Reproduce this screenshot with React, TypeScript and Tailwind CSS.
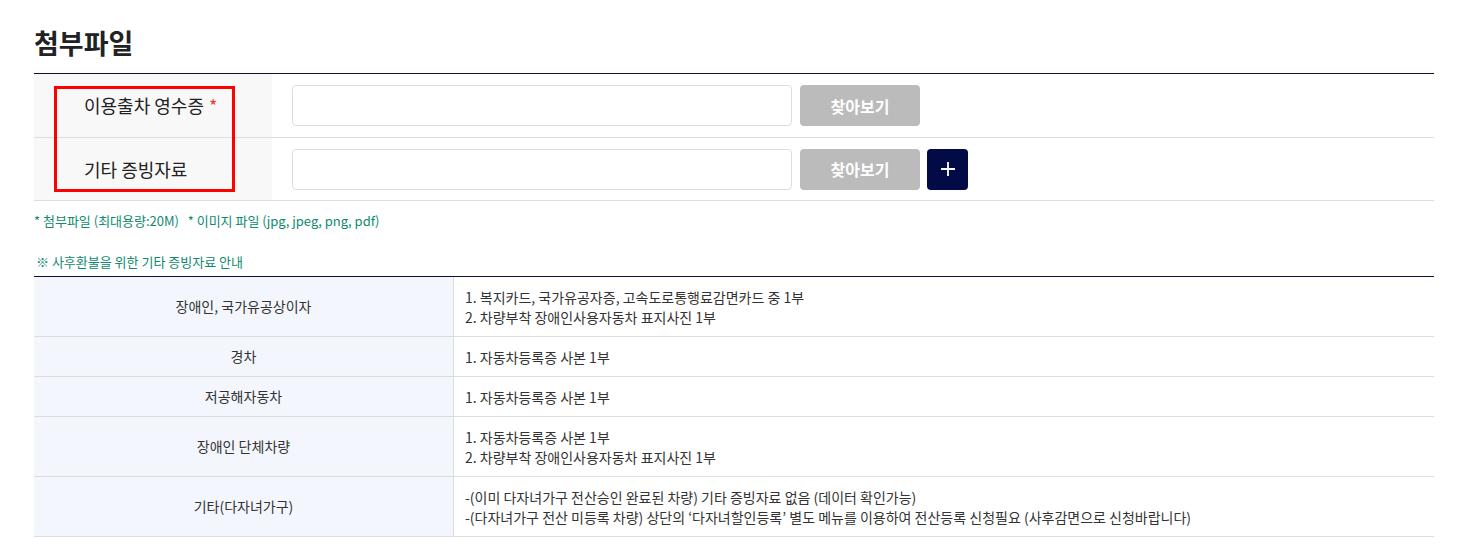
import React from 'react'

const font = { fontFamily: '"Noto Sans CJK KR", "Noto Sans", sans-serif' }

const guide = [
  { title: '장애인, 국가유공상이자', lines: ['1. 복지카드, 국가유공자증, 고속도로통행료감면카드 중 1부', '2. 차량부착 장애인사용자동차 표지사진 1부'] },
  { title: '경차', lines: ['1. 자동차등록증 사본 1부'] },
  { title: '저공해자동차', lines: ['1. 자동차등록증 사본 1부'] },
  { title: '장애인 단체차량', lines: ['1. 자동차등록증 사본 1부', '2. 차량부착 장애인사용자동차 표지사진 1부'] },
  {
    title: '기타(다자녀가구)',
    lines: [
      '-(이미 다자녀가구 전산승인 완료된 차량) 기타 증빙자료 없음 (데이터 확인가능)',
      '-(다자녀가구 전산 미등록 차량) 상단의 ‘다자녀할인등록’ 별도 메뉴를 이용하여 전산등록 신청필요 (사후감면으로 신청바랍니다)',
    ],
  },
]

function FileRow({ label, required, plus, tall }: { label: string; required?: boolean; plus?: boolean; tall?: boolean }) {
  return (
    <div className={`flex border-b border-[#dddddd] ${tall ? 'h-[64px]' : 'h-[63px]'}`}>
      <div className="flex w-[238px] items-center bg-[#f8f8f8] pl-[50px] text-[18px] text-[#222]">
        {label}
        {required && <span className="ml-[5px] text-[#e83a36]">*</span>}
      </div>
      <div className="flex items-center pl-[20px]">
        <input
          type="text"
          className="h-[41px] w-[500px] rounded-[4px] border border-[#dddddd] bg-white outline-none"
        />
        <button className="ml-[8px] h-[41px] w-[120px] rounded-[4px] bg-[#bbbbbb] text-[16px] font-bold text-white">
          찾아보기
        </button>
        {plus && (
          <button className="ml-[7px] flex h-[41px] w-[41px] items-center justify-center rounded-[4px] bg-[#020b45]">
            <svg width="16" height="16" viewBox="0 0 16 16">
              <path d="M8 1v14M1 8h14" stroke="white" strokeWidth="1.8" />
            </svg>
          </button>
        )}
      </div>
    </div>
  )
}

export default function App() {
  return (
    <div className="min-h-[551px] bg-white" style={font}>
      <div className="ml-[34px] w-[1400px]">
        <h2 className="pt-[24px] text-[27px] font-bold leading-[38px] text-[#222]">첨부파일</h2>

        <div className="relative mt-[11px] border-t border-[#0a0f40]">
          <FileRow label="이용출차 영수증" required tall />
          <FileRow label="기타 증빙자료" plus />
          <div className="absolute left-[20px] top-[12px] h-[106px] w-[181px] border-[3px] border-[#ff0000]" />
        </div>

        <p className="mt-[10px] text-[13px] leading-[20px] text-[#0f8a6e]">
          * 첨부파일 (최대용량:20M)&nbsp;&nbsp;&nbsp;* 이미지 파일 (jpg, jpeg, png, pdf)
        </p>

        <p className="mt-[21px] pl-[2px] text-[13px] leading-[20px] text-[#0f8a6e]">
          ※ 사후환불을 위한 기타 증빙자료 안내
        </p>

        <div className="mt-[4px] border-t border-[#0a0f40] text-[14px] text-[#333]">
          {guide.map((g) => (
            <div key={g.title} className="flex border-b border-[#dddddd]">
              <div className="flex w-[420px] items-center justify-center border-r border-[#dddddd] bg-[#f3f6fd]">
                {g.title}
              </div>
              <div className="py-[9.5px] pl-[11px] leading-[20px]">
                {g.lines.map((l) => (
                  <div key={l}>{l}</div>
                ))}
              </div>
            </div>
          ))}
        </div>
      </div>
    </div>
  )
}
